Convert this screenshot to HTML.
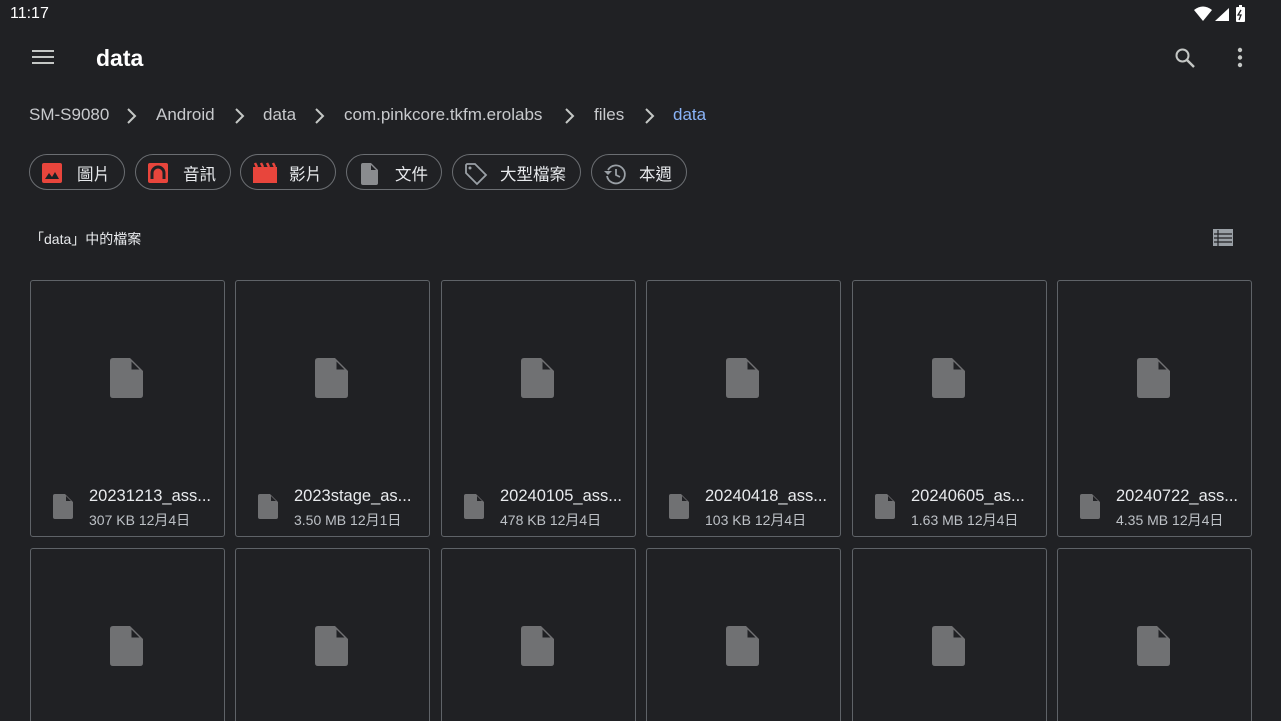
<!DOCTYPE html>
<html><head><meta charset="utf-8"><style>
html,body{margin:0;width:1281px;height:721px;overflow:hidden}
body{background:#202124;font-family:"Liberation Sans","Noto Sans CJK TC",sans-serif;color:#e8eaed;position:relative}
.a{position:absolute}
.chip{position:absolute;top:154px;height:34px;border:1px solid #6b6e72;border-radius:18px;box-sizing:content-box}
.chip svg{position:absolute;left:11px;top:7px}
.chip span{position:absolute;top:6px;font-size:16.5px;color:#e8eaed}
.card{position:absolute;width:195px;border:1px solid #5f6368;border-radius:3px;box-sizing:border-box}
.bc{position:absolute;top:105px;font-size:17px;color:#c8cacd}
.nm{position:absolute;left:58px;top:206px;font-size:16.5px;color:#e8eaed;white-space:nowrap}
.mt{position:absolute;left:58px;top:229px;font-size:14px;color:#bdc1c6;white-space:nowrap}
</style></head><body>
<div class="a" style="left:10px;top:5px;font-size:16px;color:#fff">11:17</div>
<svg class="a" style="left:1193px;top:5px" width="60" height="18"><path d="M1 5 Q10 -2 19 5 L10 16Z" fill="#fff"/><path d="M22 16 L36 16 L36 3Z" fill="#fff"/><rect x="43" y="2" width="9" height="15" rx="1" fill="#fff"/><rect x="46" y="0" width="3" height="3" fill="#fff"/><path d="M48 5 L45 10 L48 10 L46 15" stroke="#202124" stroke-width="1.3" fill="none"/></svg>
<svg class="a" style="left:32px;top:48px" width="22" height="18"><rect x="0" y="2" width="22" height="2" fill="#c4c7c5"/><rect x="0" y="8" width="22" height="2" fill="#c4c7c5"/><rect x="0" y="14" width="22" height="2" fill="#c4c7c5"/></svg>
<div class="a" style="left:96px;top:45px;font-size:23px;color:#fff;font-weight:bold">data</div>
<svg class="a" style="left:1173px;top:46px" width="24" height="24"><circle cx="9.5" cy="9.5" r="6" stroke="#c4c7c5" stroke-width="2" fill="none"/><path d="M14 14 L21 21" stroke="#c4c7c5" stroke-width="2.4"/></svg>
<svg class="a" style="left:1234px;top:46px" width="12" height="24"><circle cx="6" cy="4" r="2.2" fill="#c4c7c5"/><circle cx="6" cy="11.5" r="2.2" fill="#c4c7c5"/><circle cx="6" cy="19" r="2.2" fill="#c4c7c5"/></svg>
<div class="bc" style="left:29px">SM-S9080</div>
<div class="bc" style="left:156px">Android</div>
<div class="bc" style="left:263px">data</div>
<div class="bc" style="left:344px">com.pinkcore.tkfm.erolabs</div>
<div class="bc" style="left:594px">files</div>
<div class="bc" style="left:673px;color:#8ab4f8">data</div>
<svg class="a" style="left:0;top:106px" width="700" height="20" fill="none" stroke="#c4c7c5" stroke-width="2"><path d="M128 3 L135 10 L128 17"/><path d="M236 3 L243 10 L236 17"/><path d="M316 3 L323 10 L316 17"/><path d="M566 3 L573 10 L566 17"/><path d="M646 3 L653 10 L646 17"/></svg>
<div class="chip" style="left:29px;width:94px"><svg width="22" height="22"><rect x="1" y="1" width="20" height="20" rx="2" fill="#e8453c"/><path d="M4 17 L8 11 L11 15 L14 10 L18 17Z" fill="#202124"/></svg><span style="left:47px">圖片</span></div>
<div class="chip" style="left:135px;width:94px"><svg width="22" height="22"><rect x="1" y="1" width="20" height="20" rx="2" fill="#e8453c"/><path d="M5 17 V11 A6 6 0 0 1 17 11 V17" stroke="#202124" stroke-width="3" fill="none"/></svg><span style="left:47px">音訊</span></div>
<div class="chip" style="left:240px;width:94px"><svg width="26" height="22"><rect x="1" y="5" width="24" height="16" fill="#e8453c"/><path d="M3 1 L5 5 M9 1 L11 5 M15 1 L17 5 M21 1 L23 5" stroke="#e8453c" stroke-width="2.5"/></svg><span style="left:48px">影片</span></div>
<div class="chip" style="left:346px;width:94px"><svg width="22" height="24"><path d="M5 1 H13 L20 8 V21 Q20 23 18 23 H5 Q3 23 3 21 V3 Q3 1 5 1Z" fill="#8a8c8f"/><path d="M13 3 V8 H18Z" fill="#202124"/></svg><span style="left:48px">文件</span></div>
<div class="chip" style="left:452px;width:127px"><svg width="26" height="24"><path d="M2 3 V11 L13 22 L22 13 L11 2 H3Z" stroke="#9aa0a6" stroke-width="1.8" fill="none"/><circle cx="6" cy="6" r="1.5" fill="#9aa0a6"/></svg><span style="left:47px">大型檔案</span></div>
<div class="chip" style="left:591px;width:94px"><svg width="24" height="24"><path d="M5 8 A9 9 0 1 1 4 14" stroke="#9aa0a6" stroke-width="1.8" fill="none"/><path d="M1 9 L5 13 L9 9" fill="#9aa0a6"/><path d="M13 7 V13 L17 15" stroke="#9aa0a6" stroke-width="1.8" fill="none"/></svg><span style="left:47px">本週</span></div>
<div class="a" style="left:30px;top:229px;font-size:14px;color:#e8eaed">「data」中的檔案</div>
<svg class="a" style="left:1212px;top:228px" width="22" height="20"><rect x="1" y="1" width="20" height="17" fill="#9aa0a6"/><path d="M2 6 H20 M2 10 H20 M2 14 H20 M6 2 V18" stroke="#202124" stroke-width="1.2"/></svg>
<div id="g"></div>
<script>
var xs=[30,235,441,646,852,1057],n=["20231213_ass...","2023stage_as...","20240105_ass...","20240418_ass...","20240605_as...","20240722_ass..."],m=["307 KB 12月4日","3.50 MB 12月1日","478 KB 12月4日","103 KB 12月4日","1.63 MB 12月4日","4.35 MB 12月4日"],h="";
var big='<svg style="position:absolute;left:79px;top:77px" width="34" height="40"><path d="M3 0 H20 L33 13 V37 Q33 40 30 40 H3 Q0 40 0 37 V3 Q0 0 3 0Z" fill="#707173"/><path d="M21.5 3.5 V11.5 H29.5Z" fill="#202124"/></svg>';
var sm='<svg style="position:absolute;left:22px;top:213px" width="20" height="25"><path d="M2 0 H12 L20 8 V23 Q20 25 18 25 H2 Q0 25 0 23 V2 Q0 0 2 0Z" fill="#707173"/><path d="M13 2 V7 H18Z" fill="#202124"/></svg>';
for(var i=0;i<6;i++){h+='<div class="card" style="left:'+xs[i]+'px;top:280px;height:257px">'+big+sm+'<div class="nm">'+n[i]+'</div><div class="mt">'+m[i]+'</div></div>';h+='<div class="card" style="left:'+xs[i]+'px;top:548px;height:173px;border-bottom:none;border-radius:3px 3px 0 0">'+big+'</div>';}
document.getElementById("g").innerHTML=h;
</script>
</body></html>
